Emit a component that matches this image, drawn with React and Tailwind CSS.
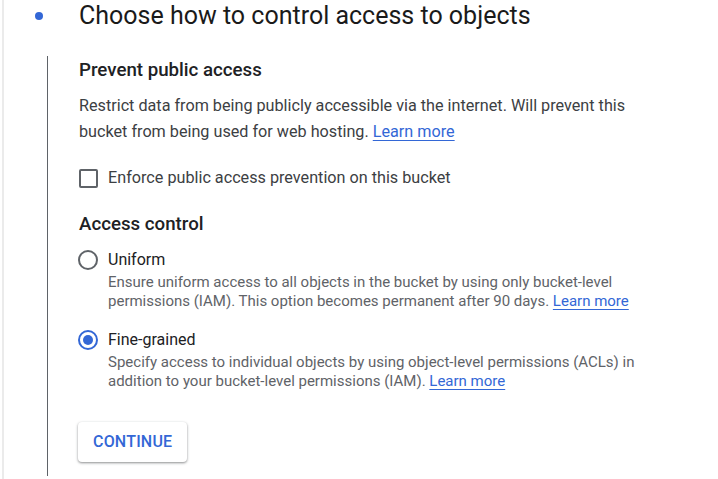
import React, { useState } from "react";

function LearnMore() {
    return (
        <a href="#" className="text-[#3367d6] underline decoration-[#3367d6] underline-offset-[3px]">
            Learn more
        </a>
    );
}

function Radio({ checked }) {
    return (
        <span
            className={
                "ml-[-1px] mt-[2px] flex h-[20px] w-[20px] shrink-0 items-center justify-center rounded-full border-2 " +
                (checked ? "border-[#3367d6]" : "border-[#5f6368]")
            }
        >
            {checked && <span className="h-[10px] w-[10px] rounded-full bg-[#3367d6]" />}
        </span>
    );
}

export default function App() {
    const [mode, setMode] = useState("fine");
    const [enforce, setEnforce] = useState(false);

    return (
        <div
            className="relative h-[479px] overflow-hidden bg-white text-[#202124]"
            style={{ fontFamily: "Roboto, 'Liberation Sans', sans-serif" }}
        >
            <div className="absolute bottom-0 left-[2px] top-0 w-[2px] bg-[#ebebeb]" />
            <div className="flex items-center pt-[1px]">
                <div className="flex w-[79px] justify-center pl-[16px] pr-[16px]">
                    <span className="ml-[-1px] h-[8px] w-[8px] rounded-full bg-[#3367d6]" />
                </div>
                <h2 className="text-[25px] leading-[30px] text-[#1a1a1a]">
                    Choose how to control access to objects
                </h2>
            </div>
            <div className="ml-[47px] mt-[25px] h-[420px] border-l border-[#5f6368] pl-[31px]">
                <h3 className="pt-[2px] text-[18.7px] font-medium leading-[24px]">Prevent public access</h3>
                <p className="mt-[11px] w-[580px] text-[16.2px] leading-[26px] text-[#3c4043]">
                    Restrict data from being publicly accessible via the internet. Will prevent this bucket from
                    being used for web hosting. <LearnMore />
                </p>
                <label className="mt-[23px] flex cursor-pointer items-center gap-[10px]" onClick={() => setEnforce(!enforce)}>
                    <span className="h-[19px] w-[19px] rounded-[2px] border-2 border-[#5f6368]" />
                    <span className="text-[16.2px] leading-[20px] text-[#3c4043]">
                        Enforce public access prevention on this bucket
                    </span>
                </label>
                <h3 className="mt-[24px] text-[18.7px] font-medium leading-[24px]">Access control</h3>
                <div className="mt-[12px] flex gap-[10px]" onClick={() => setMode("uniform")}>
                    <Radio checked={mode === "uniform"} />
                    <div>
                        <div className="text-[16px] leading-[24px] text-[#202124]">Uniform</div>
                        <p className="mt-[1px] w-[560px] text-[15px] leading-[19px] text-[#5f6368]">
                            Ensure uniform access to all objects in the bucket by using only bucket-level
                            permissions (IAM). This option becomes permanent after 90 days. <LearnMore />
                        </p>
                    </div>
                </div>
                <div className="mt-[17px] flex gap-[10px]" onClick={() => setMode("fine")}>
                    <Radio checked={mode === "fine"} />
                    <div>
                        <div className="text-[16px] leading-[24px] text-[#202124]">Fine-grained</div>
                        <p className="mt-[1px] w-[560px] text-[15px] leading-[19px] text-[#5f6368]">
                            Specify access to individual objects by using object-level permissions (ACLs) in
                            addition to your bucket-level permissions (IAM). <LearnMore />
                        </p>
                    </div>
                </div>
                <button className="ml-[-1px] mt-[31px] h-[40px] rounded-[4px] bg-white px-[15px] text-[16px] font-medium tracking-[0.2px] text-[#3367d6] shadow-[0_1px_3px_rgba(60,64,67,0.35),0_1px_2px_rgba(60,64,67,0.3)]">
                    CONTINUE
                </button>
            </div>
        </div>
    );
}
